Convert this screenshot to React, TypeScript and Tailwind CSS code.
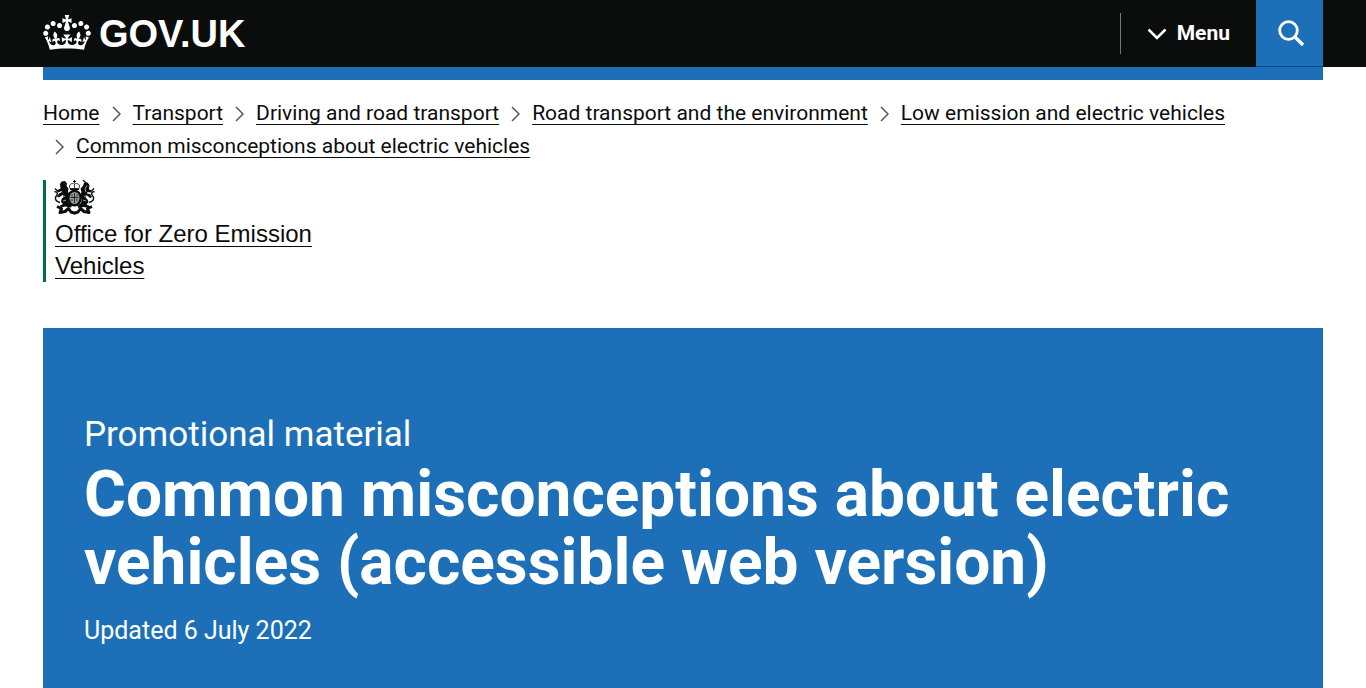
import React from 'react';

const breadcrumbs = [
  'Home',
  'Transport',
  'Driving and road transport',
  'Road transport and the environment',
  'Low emission and electric vehicles',
  'Common misconceptions about electric vehicles',
];

function Crown() {
  return (
    <svg viewBox="0 0 132 97" className="h-[35px] w-12 shrink-0" fill="currentColor" aria-hidden="true">
      <path d="M25 30.2c3.5 1.5 7.7-.2 9.1-3.7 1.5-3.6-.2-7.8-3.9-9.2-3.6-1.4-7.6.3-9.1 3.9-1.4 3.5.3 7.5 3.9 9zM9 39.5c3.6 1.5 7.8-.2 9.2-3.7 1.5-3.6-.2-7.8-3.9-9.1-3.6-1.5-7.6.2-9.1 3.8-1.4 3.5.3 7.5 3.8 9zM4.4 57.2c3.5 1.5 7.7-.2 9.1-3.8 1.5-3.6-.2-7.7-3.9-9.1-3.5-1.5-7.6.3-9.1 3.8-1.4 3.5.3 7.6 3.9 9.1zm38.3-21.4c3.5 1.5 7.7-.2 9.1-3.8 1.5-3.6-.2-7.7-3.9-9.1-3.6-1.5-7.6.3-9.1 3.8-1.3 3.6.4 7.7 3.9 9.1zm64.4-5.6c-3.6 1.5-7.8-.2-9.1-3.7-1.5-3.6.2-7.8 3.8-9.2 3.6-1.4 7.7.3 9.2 3.9 1.3 3.5-.4 7.5-3.9 9zm15.9 9.3c-3.6 1.5-7.7-.2-9.1-3.7-1.5-3.6.2-7.8 3.7-9.1 3.6-1.5 7.7.2 9.2 3.8 1.5 3.5-.3 7.5-3.8 9zm4.7 17.7c-3.6 1.5-7.8-.2-9.2-3.8-1.5-3.6.2-7.7 3.9-9.1 3.6-1.5 7.7.3 9.2 3.8 1.3 3.5-.4 7.6-3.9 9.1zM89.3 35.8c-3.6 1.5-7.8-.2-9.2-3.8-1.4-3.6.2-7.7 3.9-9.1 3.6-1.5 7.7.3 9.2 3.8 1.4 3.6-.3 7.7-3.9 9.1zM69.7 17.7l8.9 4.7V9.3l-8.9 2.8c-.2-.3-.5-.6-.9-.9L72.4 0H59.6l3.5 11.2c-.3.3-.6.5-.9.9l-8.8-2.8v13.1l8.8-4.7c.3.3.6.7.9.9l-5 15.4v.1c-.2.8-.4 1.6-.4 2.4 0 4.1 3.1 7.5 7 8.1h.2c.3 0 .7.1 1 .1.4 0 .7 0 1-.1h.2c4-.6 7.1-4.1 7.1-8.1 0-.8-.1-1.7-.4-2.4V34l-5.1-15.4c.4-.2.7-.6 1-.9zM66 92.8c16.9 0 32.8 1.1 47.1 3.2 4-16.9 8.9-26.7 14-33.5l-9.6-3.4c1 4.9 1.1 7.2 0 10.2-1.5-1.4-3-4.3-4.2-8.7L108.6 76c2.8-2 5-3.2 7.5-3.3-4.4 9.4-10 11.9-13.6 11.2-4.3-.8-6.3-4.6-5.6-7.9 1-4.7 5.7-5.9 8-.5 4.3-8.7-3-11.4-7.6-8.8 7.1-7.2 7.9-13.5 2.1-21.1-8 6.1-8.1 12.3-4.5 20.8-4.7-5.4-12.1-2.5-9.5 6.2 3.4-5.2 7.9-2 7.2 3.1-.6 4.3-6.4 7.8-13.5 7.2-10.3-.9-10.9-8-11.2-13.8 2.5-.5 7.1 1.8 11 7.3L80.2 60c-4.1 4.4-8 5.3-12.3 5.4 1.4-4.4 8-11.6 8-11.6H55.5s6.4 7.2 7.9 11.6c-4.2-.1-8-1-12.3-5.4l1.4 16.4c3.9-5.5 8.5-7.7 10.9-7.3-.3 5.8-.9 12.8-11.1 13.8-7.2.6-12.9-2.9-13.5-7.2-.7-5 3.8-8.3 7.1-3.1 2.7-8.7-4.6-11.6-9.4-6.2 3.7-8.5 3.6-14.7-4.6-20.8-5.8 7.6-5 13.9 2.2 21.1-4.7-2.6-11.9.1-7.7 8.8 2.3-5.5 7.1-4.2 8.1.5.7 3.3-1.3 7.1-5.7 7.9-3.5.7-9-1.8-13.5-11.2 2.5.1 4.7 1.3 7.5 3.3l-4.7-15.4c-1.2 4.4-2.7 7.2-4.3 8.7-1.1-3-.9-5.3 0-10.2l-9.5 3.4c5 6.9 9.9 16.7 14 33.5 14.8-2.1 30.8-3.2 47.7-3.2z" />
    </svg>
  );
}

function RoyalArms() {
  return (
    <svg viewBox="0 0 42 36" className="h-9 w-[42px]" fill="none" stroke="#0b0c0c" aria-hidden="true">
      {/* Crown */}
      <path d="M20.5 0v3M19 1.500h3" strokeWidth="1" />
      <path d="M16 8.500c-2-4 2-6 4.500-4.500 2.500-1.500 6.500.5 4.500 4.500zM20.500 8V4" strokeWidth=".8" />
      <path d="M16 9.300h9" strokeWidth="1.400" />
      {/* Lion */}
      <path d="M6 4l1.500-2.500 3.500-.5 2 2.500-.5 2.500 2 2.500-.5 3 1.500 4-1.500 3 .5 4 3.500 3-1 2-5.500-1-5 1-.5-2 3-1.500-2-2 .5-3 2-2-1-2-3.500 2.500-2-1 2-3 3-1.500-.5-1-3.500 1.500-1.500-2 4-2z" fill="#0b0c0c" stroke="none" />
      <path d="M6 22.500c-6-1.500-5-5.500-3-7.500 1-2-.5-4-2.500-3M1 8.500l2 2" strokeWidth="1.400" />
      <path d="M8 15.500l3 1M9 21l3-1" stroke="#fff" strokeWidth=".6" />
      {/* Unicorn */}
      <path d="M35.500 5l-2-2.500-3.500.5-1 3-2.500 2.500 1 3.500-1.500 4 2 3-1 4-3.500 3 1 2 5.500-1 5 1 .5-2-3-1.500 2-2.500-1-2.500-2-2 1.500-2 3 2.500 2-1-2-3-3-.5.5-1.500 3.500.5 1.500-2-3.500-1z" fill="#0b0c0c" stroke="none" />
      <path d="M32.500 3.500L29 0M35 22.500c6-1.500 5-5.500 3-7.500-1-2 .5-4 2.500-3M40 8.500l-2 2" strokeWidth="1.400" />
      <path d="M33 5.500l-2 3.500 1 3M33 15.500l-3 1M32 21l-3-1" stroke="#fff" strokeWidth=".6" />
      {/* Shield and garter */}
      <ellipse cx="20.500" cy="18" rx="6.200" ry="7.300" fill="#999" strokeWidth="2.400" />
      <path d="M16.500 17.500h8M20.500 13v10M18 14.500v2M23 14.500v2M18 19v2M23 19v2" strokeWidth=".8" />
      {/* Motto ribbon */}
      <path d="M3 26.500l4.500 2-1.500 4 5-1 3.500-3 2.500 3.500 3.500 1.200 3.500-1.200 2.500-3.500 3.500 3 5 1-1.500-4 4.500-2" strokeWidth="3" strokeLinejoin="round" />
    </svg>
  );
}

export default function App() {
  return (
    <div className="bg-white font-[Roboto,'Noto_Sans',sans-serif] text-[#0b0c0c]">
      <header className="bg-[#0b0c0c] px-[43px] text-white">
        <div className="flex h-[67px] items-center">
          <a href="#" className="flex items-center gap-2 pb-0.5 font-['Liberation_Sans',Arial,sans-serif] text-[38px] leading-none font-bold">
            <Crown />
            <span className="pt-0.5">GOV.UK</span>
          </a>
          <div className="ml-auto flex h-full items-center">
            <button type="button" className="flex h-[41px] items-center gap-2.5 border-l border-[#757778] pr-[26px] pl-[26px] text-[21px] font-bold">
              <svg viewBox="0 0 20 12" className="h-3 w-5" fill="none" stroke="currentColor" strokeWidth="2.500" aria-hidden="true">
                <path d="M1.500 1.500L10 10l8.500-8.500" />
              </svg>
              Menu
            </button>
            <button type="button" aria-label="Search GOV.UK" className="flex h-full w-[67px] items-center justify-center border-b border-[#0b4a80] bg-[#1d70b8] pl-0.5">
              <svg viewBox="0 0 26 26" className="h-[26px] w-[26px]" fill="none" stroke="currentColor" strokeWidth="2.800" aria-hidden="true">
                <circle cx="10.500" cy="10.500" r="8.800" />
                <path d="M16.500 16.500l8.500 8.500" strokeWidth="3.400" />
              </svg>
            </button>
          </div>
        </div>
      </header>

      <div className="px-[43px]">
        <div className="h-[13px] bg-[#1d70b8]" />

        <nav aria-label="Breadcrumb" className="pt-[17px]">
          <ol className="flex flex-wrap text-[21px] leading-[33px]">
            {breadcrumbs.map((label, index) => (
              <li key={label} className="flex items-center">
                {index > 0 && (
                  <svg viewBox="0 0 9 16" className="mr-3 ml-3 h-4 w-[9px]" fill="none" stroke="#505a5f" strokeWidth="1.500" aria-hidden="true">
                    <path d="M1 1l7 7-7 7" />
                  </svg>
                )}
                <a href="#" className="underline decoration-1 underline-offset-4">{label}</a>
              </li>
            ))}
          </ol>
        </nav>

        <div className="mt-[17px] w-[300px] border-l-3 border-[#00703c] pl-2">
          <RoyalArms />
          <a href="#" className="mt-0.5 block pl-px font-['Liberation_Sans',Arial,sans-serif] text-2xl leading-8 underline decoration-1 underline-offset-4">
            Office for Zero Emission Vehicles
          </a>
        </div>

        <main className="mt-[46px] bg-[#1d70b8] px-[41px] pt-[85px] pb-12 text-white">
          <p className="text-[35px] leading-[44px]">Promotional material</p>
          <h1 className="mt-1 text-[64px] leading-[68px] font-bold">
            Common misconceptions about electric vehicles (accessible web version)
          </h1>
          <p className="mt-4 text-[25px] leading-9">Updated 6 July 2022</p>
        </main>
      </div>
    </div>
  );
}
